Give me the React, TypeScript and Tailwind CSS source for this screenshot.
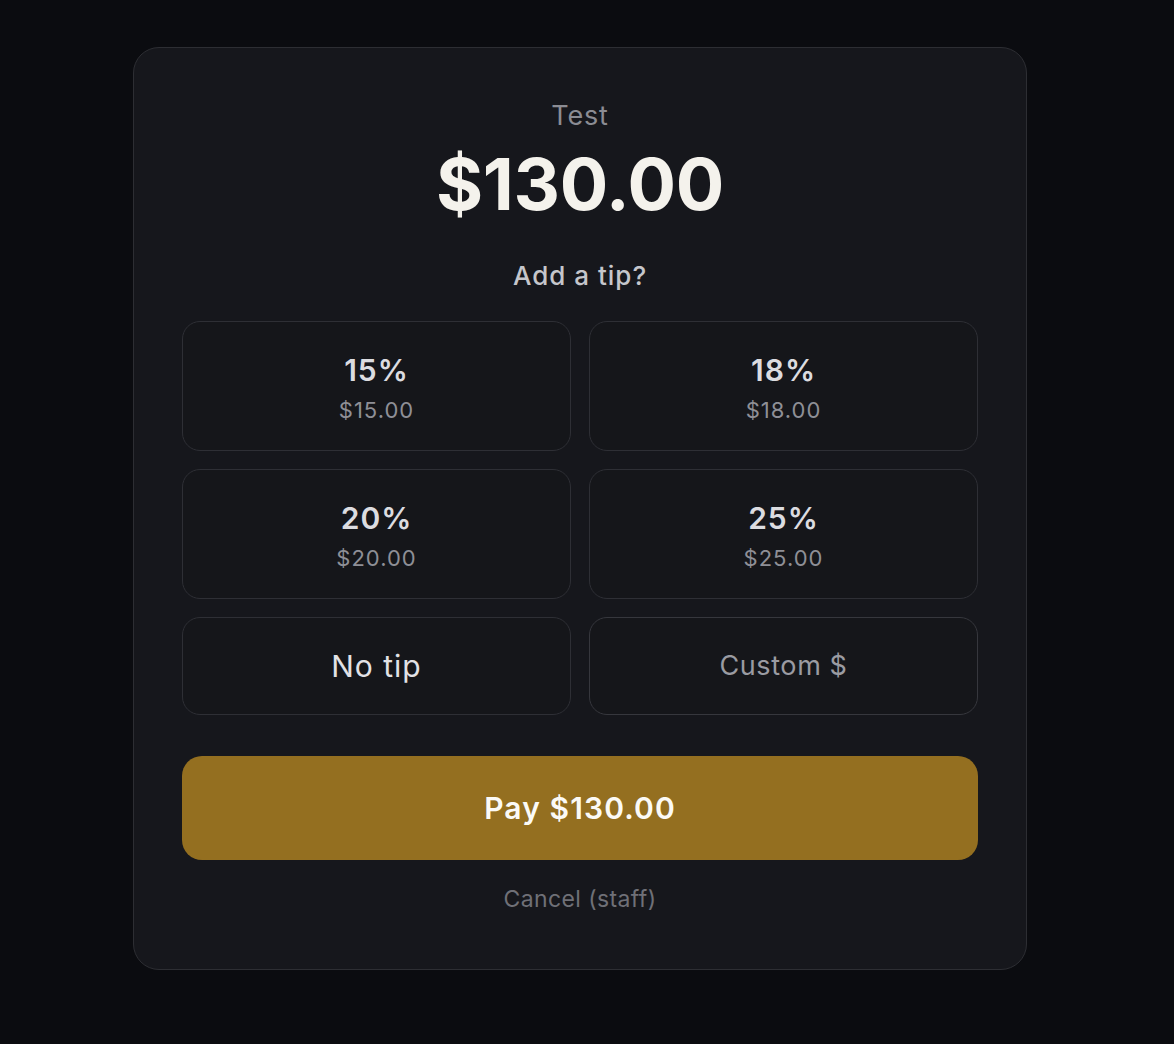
import React, { useState } from 'react';

const tips = [
    { pct: 15, amount: '$15.00' },
    { pct: 18, amount: '$18.00' },
    { pct: 20, amount: '$20.00' },
    { pct: 25, amount: '$25.00' },
];

export default function App() {
    const [selected, setSelected] = useState<number | null>(null);

    return (
        <div
            className="flex min-h-screen justify-center bg-[#0b0c10] pt-[47px] pr-[14px] text-white"
            style={{ fontFamily: 'Inter, "Noto Sans", sans-serif' }}
        >
            <div className="flex h-fit w-[894px] flex-col items-center rounded-[26px] border border-[#2d2e33] bg-[#16171c] px-12 pt-12 pb-14">
                {/* Header */}
                <p className="text-[27px] leading-[40px] tracking-[0.8px] text-[#8b8c93]">Test</p>
                <h1 className="mt-[12px] text-[72px] leading-[72px] font-bold tracking-[-0.3px] text-[#f4f2ec]">$130.00</h1>
                <p className="mt-[40px] text-[26px] leading-[32px] font-medium tracking-[1px] text-[#c5c6cb]">Add a tip?</p>

                {/* Tip options */}
                <div className="mt-[29px] grid w-full grid-cols-2 gap-[18px]">
                    {tips.map((t) => (
                        <button
                            key={t.pct}
                            onClick={() => setSelected(t.pct)}
                            className="flex h-[130px] flex-col items-center justify-center gap-[7px] rounded-[18px] border border-[#2e2f35] bg-[#15161a] pt-[4px]"
                        >
                            <span className="text-[30px] leading-[36px] font-semibold tracking-[1px] text-[#dcdce0]">{t.pct}%</span>
                            <span className="text-[22px] leading-[30px] tracking-[1px] text-[#8e8f96]">{t.amount}</span>
                        </button>
                    ))}
                    <button
                        onClick={() => setSelected(0)}
                        className="flex h-[98px] items-center justify-center rounded-[18px] border border-[#2e2f35] bg-[#15161a] text-[30px] tracking-[1px] text-[#e2e2e6]"
                    >
                        No tip
                    </button>
                    <button className="flex h-[98px] items-center justify-center rounded-[18px] border border-[#36373d] bg-[#15161a] text-[27px] tracking-[0.6px] text-[#9a9ba2]">
                        Custom $
                    </button>
                </div>

                {/* Pay */}
                <button className="mt-[41px] flex h-[104px] w-full items-center justify-center rounded-[20px] bg-[#946f20] text-[30px] font-semibold tracking-[1.1px] text-[#fbfaf6]">
                    Pay $130.00
                </button>
                <button className="mt-[25px] text-[23px] leading-[28px] tracking-[0.4px] text-[#6f7077]">Cancel (staff)</button>
                {selected !== null && <span className="hidden">{selected}</span>}
            </div>
        </div>
    );
}
